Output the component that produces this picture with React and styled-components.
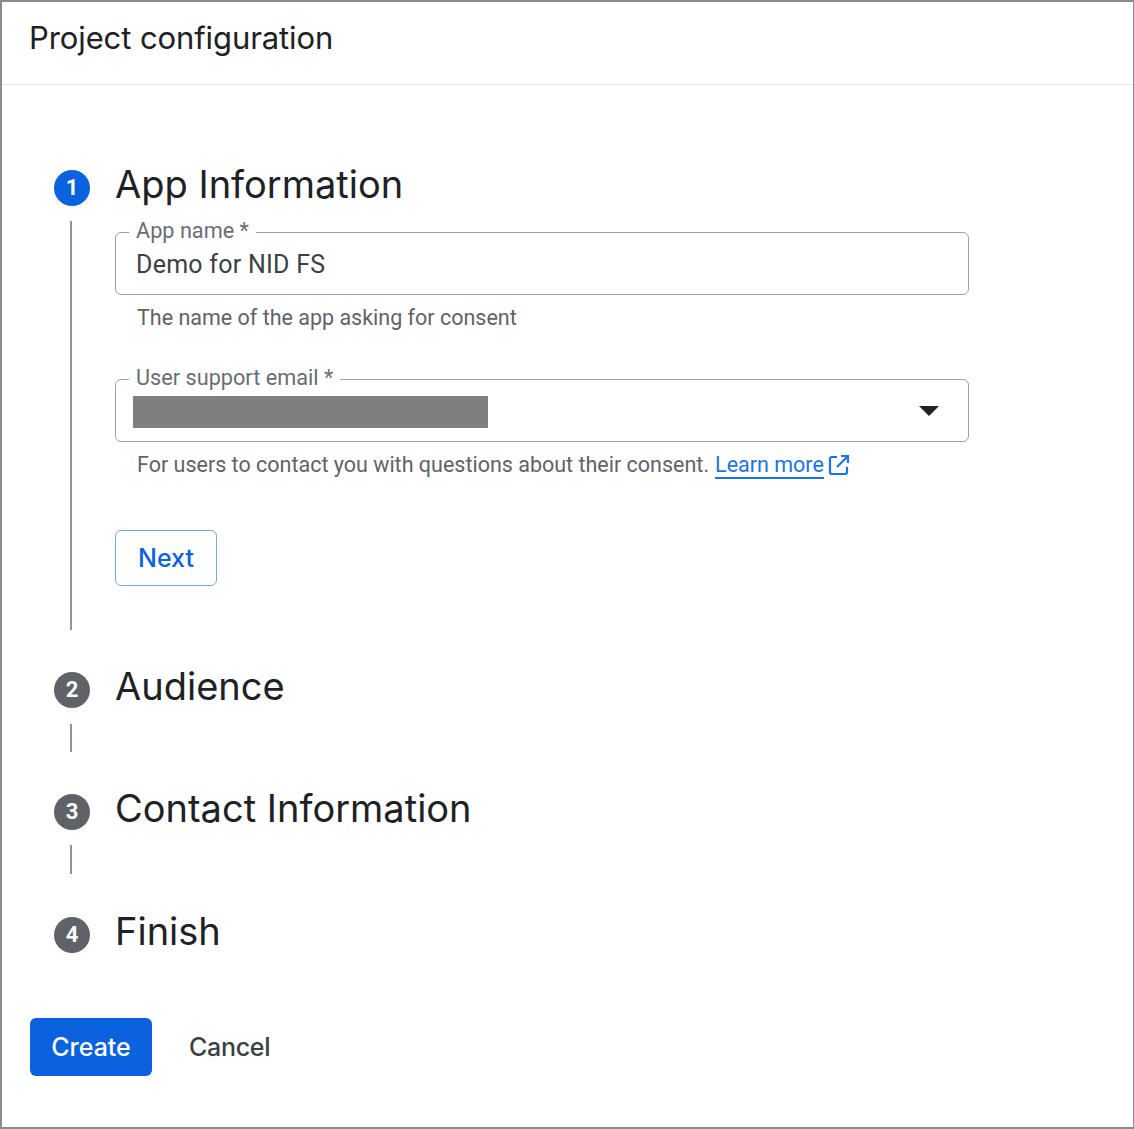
import React from "react";
import styled, { createGlobalStyle } from "styled-components";

const Global = createGlobalStyle`
  html, body { margin: 0; padding: 0; background: #fff; }
  * { box-sizing: border-box; }
  body { font-family: Roboto, "Liberation Sans", sans-serif; }
`;
const HEAD = `Inter, "Open Sans", Roboto, sans-serif`;

const Frame = styled.div`
  width: 1134px; height: 1129px;
  border: 2px solid #8c8c8c;
  border-right-width: 1px;
  display: flex; flex-direction: column;
  background: #fff;
`;
const Header = styled.header`
  height: 83px;
  flex: none;
  border-bottom: 1px solid #e4e6e8;
  padding: 16px 0 0 27px;
`;
const Title = styled.h1`
  margin: 0;
  font: 400 31px/40px ${HEAD};
  letter-spacing: -0.1px;
  color: #202124;
`;
const Steps = styled.div`
  display: flex; flex-direction: column;
  padding: 85px 0 0 52px;
`;
const Step = styled.section`
  display: grid;
  grid-template-columns: 36px 1fr;
  column-gap: 25px;
`;
const Rail = styled.div`
  display: flex; flex-direction: column; align-items: center;
`;
const Badge = styled.div`
  width: 36px; height: 36px; border-radius: 50%;
  flex: none;
  display: flex; align-items: center; justify-content: center;
  background: ${p => (p.$active ? "#0b62de" : "#5f6368")};
  color: #fff;
  font: 700 22px/1 Roboto, sans-serif;
`;
const Connector = styled.div`
  width: 2px;
  height: ${p => p.$h}px;
  margin-top: ${p => p.$top}px;
  margin-right: 2px;
  background: #8f9296;
`;
const StepBody = styled.div`
  min-height: ${p => p.$min || 0}px;
`;
const StepTitle = styled.h2`
  margin: -8px 0 0;
  font: 400 38px/44px ${HEAD};
  color: #202124;
`;
const Field = styled.fieldset`
  width: 854px; height: 75px;
  margin: ${p => p.$top}px 0 0;
  padding: 0 16px 0 21px;
  border: 1.5px solid #9aa0a6;
  border-radius: 6px;
  display: flex; align-items: center; justify-content: space-between;
`;
const Legend = styled.legend`
  margin-left: -8px;
  padding: 0 7px 3px;
  font: 400 21.7px/1 Roboto, sans-serif;
  color: #6a6e73;
`;
const Value = styled.div`
  font: 400 25px/30px Roboto, sans-serif;
  letter-spacing: 0.25px;
  color: #3c4043;
  margin: -8px 0 0 -1px;
`;
const Redacted = styled.div`
  width: 355px; height: 32px;
  background: #7f7f7f;
  margin: -9px 0 0 -4px;
`;
const Caret = styled.div`
  width: 0; height: 0;
  margin: -11px 13px 0 0;
  border-left: 10px solid transparent;
  border-right: 10px solid transparent;
  border-top: 10px solid #202124;
`;
const Hint = styled.p`
  margin: 9px 0 0 22px;
  font: 400 21.5px/28px Roboto, sans-serif;
  color: #5f6368;
  display: flex; align-items: center;
`;
const LearnMore = styled.a`
  margin-left: 6px;
  color: #1a73e8;
  border-bottom: 2px solid #1a73e8;
  line-height: 25px;
`;
const ExternalIcon = styled.svg`
  width: 24px; height: 24px;
  margin-left: 3px;
  color: #1a73e8;
`;
const OutlineButton = styled.button`
  display: block;
  width: 102px; height: 56px;
  margin-top: 51px;
  background: #fff;
  border: 1.5px solid #7ba7ea;
  border-radius: 6px;
  color: #0b62de;
  font: 500 25px/1 ${HEAD};
`;
const Actions = styled.footer`
  display: flex; align-items: center;
  gap: 37px;
  margin: 65px 0 0 28px;
`;
const PrimaryButton = styled.button`
  width: 122px; height: 58px;
  background: #0b62de;
  border: 0;
  border-radius: 6px;
  color: #fff;
  font: 500 25px/1 ${HEAD};
`;
const TextButton = styled.button`
  background: none; border: 0; padding: 0;
  color: #3c4043;
  letter-spacing: -0.3px;
  font: 500 25px/1 ${HEAD};
`;

const steps = [
  { n: 2, title: "Audience", line: 28, top: 16, min: 122 },
  { n: 3, title: "Contact Information", line: 29, top: 15, min: 123 },
];

export default function App() {
  return (
    <Frame>
      <Global />
      <Header><Title>Project configuration</Title></Header>
      <Steps>
        <Step>
          <Rail>
            <Badge $active>1</Badge>
            <Connector $h={409} $top={15} />
          </Rail>
          <StepBody $min={502}>
            <StepTitle>App Information</StepTitle>
            <Field $top={14}>
              <Legend>App name *</Legend>
              <Value>Demo for NID FS</Value>
            </Field>
            <Hint>The name of the app asking for consent</Hint>
            <Field $top={35}>
              <Legend>User support email *</Legend>
              <Redacted />
              <Caret />
            </Field>
            <Hint>
              For users to contact you with questions about their consent.
              <LearnMore>Learn more</LearnMore>
              <ExternalIcon viewBox="0 0 24 24" fill="none" stroke="currentColor" strokeWidth="2.2">
                <path d="M10 4H5a2 2 0 0 0-2 2v13a2 2 0 0 0 2 2h13a2 2 0 0 0 2-2v-5" />
                <path d="M14 3h7v7M21 3 10 14" />
              </ExternalIcon>
            </Hint>
            <OutlineButton>Next</OutlineButton>
          </StepBody>
        </Step>
        {steps.map(s => (
          <Step key={s.n}>
            <Rail>
              <Badge>{s.n}</Badge>
              <Connector $h={s.line} $top={s.top} />
            </Rail>
            <StepBody $min={s.min}><StepTitle>{s.title}</StepTitle></StepBody>
          </Step>
        ))}
        <Step>
          <Rail><Badge>4</Badge></Rail>
          <StepBody><StepTitle>Finish</StepTitle></StepBody>
        </Step>
      </Steps>
      <Actions>
        <PrimaryButton>Create</PrimaryButton>
        <TextButton>Cancel</TextButton>
      </Actions>
    </Frame>
  );
}
